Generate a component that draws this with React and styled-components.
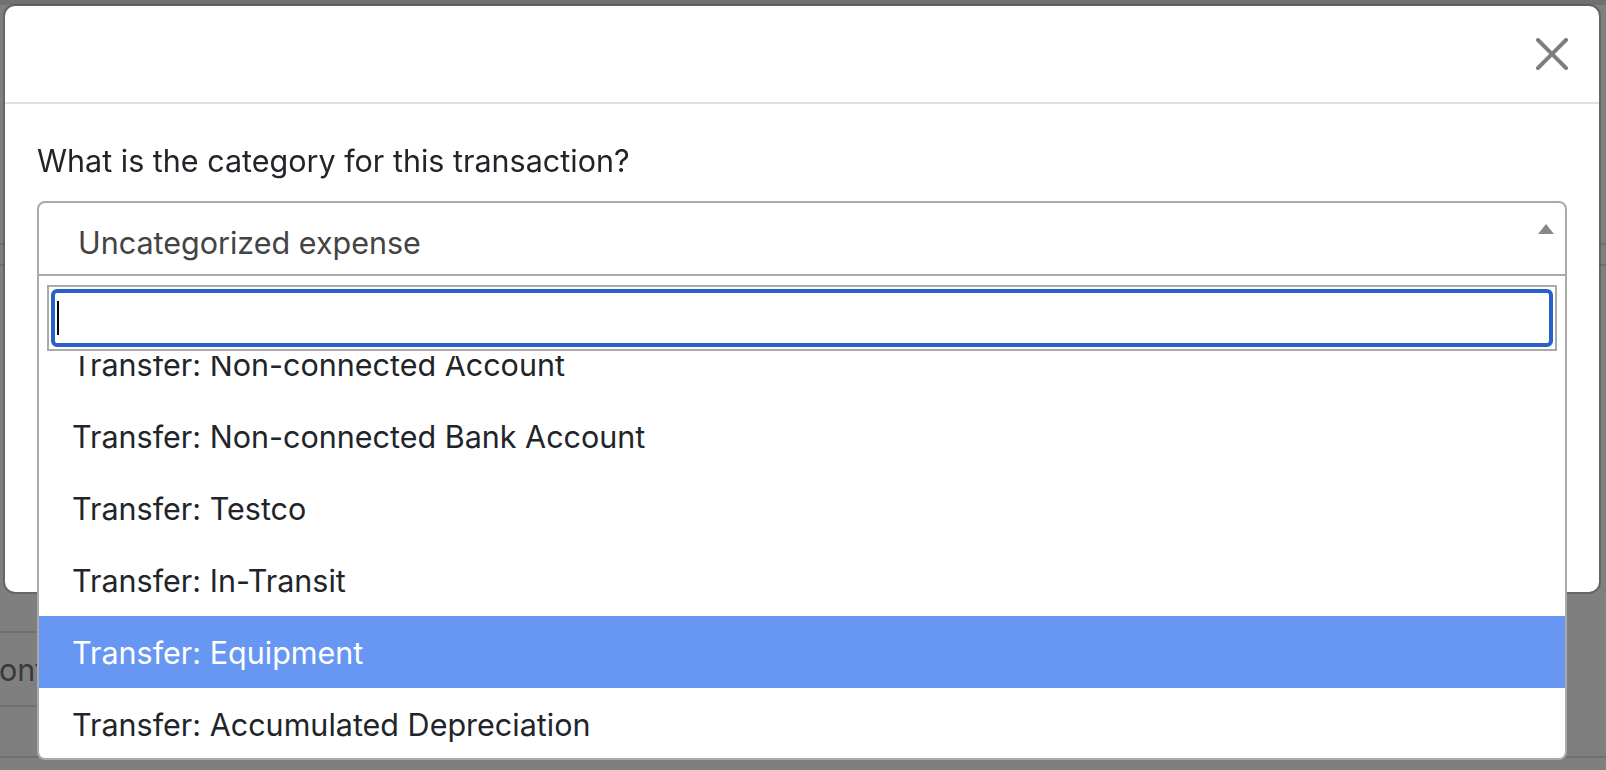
import React, { useLayoutEffect, useRef } from 'react';
import styled, { createGlobalStyle } from 'styled-components';

const GlobalStyle = createGlobalStyle`
    html, body {
        margin: 0;
        padding: 0;
    }

    body {
        font-family: Inter, "Noto Sans", "Liberation Sans", sans-serif;
        background: #fff;
        overflow: hidden;
    }

    * {
        box-sizing: border-box;
    }
`;

// page behind the modal, dimmed by the backdrop
const Page = styled.div`
    height: 100vh;
    background: #fff;
`;

const TopStrip = styled.div`
    height: 5px;
    background: #dee2e6;
`;

const FilterBar = styled.div`
    margin-top: 238px;
    height: 23px;
    border-top: 2px solid #dee2e6;
    border-bottom: 2px solid #dee2e6;
`;

const TableRow = styled.div`
    width: ${props => props.$full ? '100%' : '1520px'};
    height: ${props => props.$h}px;
    display: flex;
    align-items: center;
    border-bottom: 2px solid #dee2e6;
    font-size: 30.5px;
    color: #6c757d;
`;

const Cell = styled.span`
    margin-left: -1px;
`;

const Backdrop = styled.div`
    position: fixed;
    inset: 0;
    background: rgba(0, 0, 0, 0.5);
`;

const ModalWrap = styled.div`
    position: fixed;
    inset: 0;
    padding: 4px 0 0 3px;
`;

const ModalContent = styled.div`
    width: 1598px;
    background: #fff;
    background-clip: padding-box;
    border: 2px solid rgba(0, 0, 0, 0.2);
    border-radius: 12px;
`;

const ModalHeader = styled.div`
    height: 98px;
    display: flex;
    justify-content: flex-end;
    align-items: center;
    padding-right: 31px;
    border-bottom: 2px solid #dee2e6;
`;

const CloseButton = styled.button`
    width: 32px;
    height: 32px;
    padding: 0;
    border: 0;
    background: none;
    cursor: pointer;
    opacity: 0.5;

    svg {
        display: block;
    }
`;

const ModalBody = styled.div`
    height: 488px;
    padding: 33px 32px 0 32px;
`;

const Label = styled.label`
    display: block;
    margin-bottom: 16px;
    font-size: 30.5px;
    line-height: 48px;
    color: #212529;
`;

const SelectWrap = styled.div`
    position: relative;
`;

const SelectBox = styled.div`
    height: 75px;
    display: flex;
    align-items: flex-start;
    padding: 16px 11px 0 39px;
    border: 2px solid #aaa;
    border-radius: 8px 8px 0 0;
    background: #fff;
`;

const Value = styled.span`
    flex: 1;
    font-size: 30.5px;
    line-height: 48px;
    color: #444;
`;

const Arrow = styled.span`
    width: 0;
    height: 0;
    margin-top: 5px;
    border-left: 8px solid transparent;
    border-right: 8px solid transparent;
    border-bottom: 10px solid #888;
`;

const Dropdown = styled.div`
    position: absolute;
    top: 100%;
    left: 0;
    right: 0;
    z-index: 2;
    background: #fff;
    border: 2px solid #aaa;
    border-top: 0;
    border-radius: 0 0 8px 8px;
`;

const SearchWrap = styled.div`
    padding: 9px 8px 5px 8px;
`;

const SearchField = styled.div`
    height: 66px;
    padding: 2px;
    border: 2px solid #aaa;
`;

const FocusRing = styled.div`
    height: 100%;
    display: flex;
    align-items: center;
    padding-left: 2px;
    border: 4px solid #2a61c9;
    border-radius: 6px;
`;

const Caret = styled.span`
    width: 2px;
    height: 34px;
    background: #000;
`;

const Results = styled.ul`
    height: 402px;
    margin: 0;
    padding: 0;
    list-style: none;
    overflow-y: auto;
    scrollbar-width: none;

    &::-webkit-scrollbar {
        display: none;
    }
`;

const Option = styled.li`
    height: 72px;
    display: flex;
    align-items: center;
    padding-left: 33px;
    font-size: 30.5px;
    color: ${props => props.$active ? '#fff' : '#212529'};
    background: ${props => props.$active ? '#6896f3' : 'transparent'};
`;

const options = [
    'Transfer: Non-connected Account',
    'Transfer: Non-connected Bank Account',
    'Transfer: Testco',
    'Transfer: In-Transit',
    'Transfer: Equipment',
    'Transfer: Accumulated Depreciation',
];

function CloseIcon() {
    return (
        <svg width="32" height="32" viewBox="0 0 16 16" fill="#000">
            <path d="M.293.293a1 1 0 0 1 1.414 0L8 6.586 14.293.293a1 1 0 1 1 1.414 1.414L9.414 8l6.293 6.293a1 1 0 0 1-1.414 1.414L8 9.414l-6.293 6.293a1 1 0 0 1-1.414-1.414L6.586 8 .293 1.707a1 1 0 0 1 0-1.414z" />
        </svg>
    );
}

export default function App() {
    const listRef = useRef(null);

    useLayoutEffect(() => {
        if (listRef.current) listRef.current.scrollTop = 28;
    }, []);

    return (
        <>
            <GlobalStyle />
            <Page>
                <TopStrip />
                <FilterBar />
                <TableRow $h={367} />
                <TableRow $h={74}><Cell>ont</Cell></TableRow>
                <TableRow $h={51} $full />
            </Page>
            <Backdrop />
            <ModalWrap>
                <ModalContent>
                    <ModalHeader>
                        <CloseButton aria-label="Close"><CloseIcon /></CloseButton>
                    </ModalHeader>
                    <ModalBody>
                        <Label>What is the category for this transaction?</Label>
                        <SelectWrap>
                            <SelectBox>
                                <Value>Uncategorized expense</Value>
                                <Arrow />
                            </SelectBox>
                            <Dropdown>
                                <SearchWrap>
                                    <SearchField>
                                        <FocusRing><Caret /></FocusRing>
                                    </SearchField>
                                </SearchWrap>
                                <Results ref={listRef}>
                                    {options.map(o => (
                                        <Option key={o} $active={o === 'Transfer: Equipment'}>{o}</Option>
                                    ))}
                                </Results>
                            </Dropdown>
                        </SelectWrap>
                    </ModalBody>
                </ModalContent>
            </ModalWrap>
        </>
    );
}
